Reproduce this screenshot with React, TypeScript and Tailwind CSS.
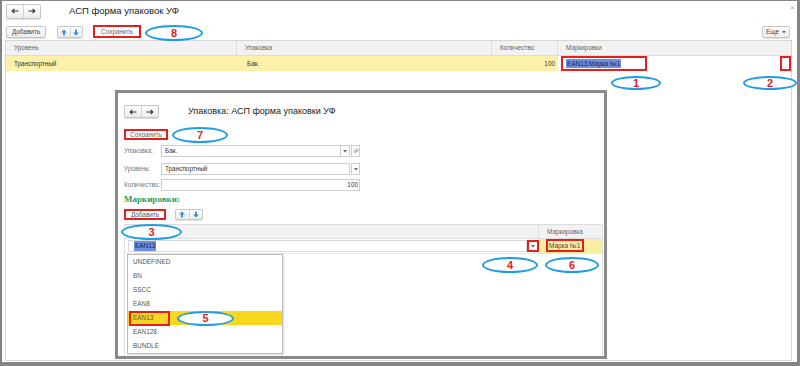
import React from 'react';

// мелкие иконки в стиле 1С
const ArrowLeft = () => (
  <svg width="8" height="6" viewBox="0 0 8 6">
    <path d="M7.5 3H1.2M3.4 0.8L1.2 3l2.2 2.2" stroke="#333" strokeWidth="1.2" fill="none" />
  </svg>
);

const ArrowRight = () => (
  <svg width="8" height="6" viewBox="0 0 8 6">
    <path d="M0.5 3h6.3M4.6 0.8L6.8 3 4.6 5.2" stroke="#333" strokeWidth="1.2" fill="none" />
  </svg>
);

const BlueUp = () => (
  <svg width="6" height="7" viewBox="0 0 7 7">
    <path d="M3.5 0L7 3.6H4.6V7H2.4V3.6H0Z" fill="#3d8ce0" />
  </svg>
);

const BlueDown = () => (
  <svg width="6" height="7" viewBox="0 0 7 7">
    <path d="M3.5 7L7 3.4H4.6V0H2.4V3.4H0Z" fill="#3d8ce0" />
  </svg>
);

const Caret = () => (
  <svg width="4" height="3" viewBox="0 0 4 3">
    <path d="M0 0h4L2 2.5Z" fill="#666" />
  </svg>
);

const LinkIcon = () => (
  <svg width="6" height="6" viewBox="0 0 8 8">
    <rect x="0.8" y="3.2" width="4" height="2.6" rx="1.3" transform="rotate(-45 2.8 4.5)" stroke="#888" strokeWidth="0.9" fill="none" />
    <rect x="3.2" y="2.2" width="4" height="2.6" rx="1.3" transform="rotate(-45 5.2 3.5)" stroke="#888" strokeWidth="0.9" fill="none" />
  </svg>
);

const btn =
  'flex items-center justify-center rounded-[2px] border border-[#c6c6c6] bg-gradient-to-b from-white to-[#ececec] shadow-[0_1px_0_#e2e2e2] text-[#444]';

const NavButtons = ({ h }: { h: string }) => (
  <div className={`${btn} ${h} w-[35px]`}>
    <div className="flex-1 flex items-center justify-center h-full border-r border-[#d4d4d4]">
      <ArrowLeft />
    </div>
    <div className="flex-1 flex items-center justify-center h-full">
      <ArrowRight />
    </div>
  </div>
);

const UpDown = ({ w, h }: { w: string; h: string }) => (
  <div className={`${btn} ${w} ${h}`}>
    <div className="flex-1 flex items-center justify-center h-full border-r border-[#d4d4d4]">
      <BlueUp />
    </div>
    <div className="flex-1 flex items-center justify-center h-full">
      <BlueDown />
    </div>
  </div>
);

// выноска: голубой овал с красной цифрой
const Callout = ({ n, cls }: { n: string; cls: string }) => (
  <div
    className={`absolute ${cls} rounded-[50%] border-2 border-[#1e9de6] bg-white flex items-center justify-center text-[#e3211c] font-bold text-[11px] leading-none`}
  >
    {n}
  </div>
);

const RedBox = ({ cls }: { cls: string }) => (
  <div className={`absolute ${cls} border-2 border-[#e3211c]`} />
);

const markingTypes = ['UNDEFINED', 'BN', 'SSCC', 'EAN8', 'EAN13', 'EAN128', 'BUNDLE'];

export default function App() {
  return (
    <div className="relative w-[800px] h-[366px] overflow-hidden bg-white pl-[2px] pt-[1px] pr-[3px] pb-[4px] flex flex-col font-['Liberation_Sans',Arial,sans-serif] text-[6.4px] text-[#333]">
      {/* Заголовок формы */}
      <div className="h-[20px] shrink-0 flex items-center pl-[4px]">
        <NavButtons h="h-[15px]" />
        <div className="ml-[28px] text-[9.5px] text-[#222]">АСП форма упаковок УФ</div>
      </div>
      <div className="absolute left-[790px] top-[2px] text-[8px] text-[#999]">×</div>

      {/* Командная панель */}
      <div className="h-[19px] shrink-0 flex items-end pb-[2px] pl-[4px] pr-[7px]">
        <div className={`${btn} w-[40px] h-[12px]`}>Добавить</div>
        <div className="ml-[11px]">
          <UpDown w="w-[26px]" h="h-[12px]" />
        </div>
        <div className="ml-[10px] w-[48px] h-[13px] border-2 border-[#e3211c] bg-white flex items-center justify-center text-[#666]">
          Сохранить
        </div>
        <div className={`${btn} ml-auto w-[28px] h-[12px] gap-[3px]`}>
          Еще
          <Caret />
        </div>
      </div>

      {/* Таблица упаковок */}
      <div className="flex-1 ml-[3px] mr-[5px] mb-[1px] border border-[#d6d6d6] flex flex-col">
        <div className="h-[15px] shrink-0 flex bg-[#f2f2f2] border-b border-[#dcdcdc] text-[#666]">
          <div className="w-[231px] pl-[8px] flex items-center border-r border-[#dcdcdc]">Уровень</div>
          <div className="w-[255px] pl-[8px] flex items-center border-r border-[#dcdcdc]">Упаковка</div>
          <div className="w-[66px] pl-[8px] flex items-center border-r border-[#dcdcdc]">Количество</div>
          <div className="flex-1 pl-[8px] flex items-center">Маркировки</div>
        </div>
        <div className="h-[15px] shrink-0 flex">
          <div className="w-[231px] pl-[8px] flex items-center bg-[#fdf0a8]">Транспортный</div>
          <div className="w-[255px] pl-[10px] flex items-center bg-[#fdf0a8]">Бак.</div>
          <div className="w-[66px] pr-[3px] flex items-center justify-end bg-[#fdf0a8]">100</div>
          <div className="flex-1 flex items-stretch">
            <div className="ml-[3px] w-[86px] border-2 border-[#e3211c] flex items-center pl-[3px]">
              <span className="bg-[#6f8fdc] text-[#0f1f5c] px-[1px]">EAN13:Марка №1</span>
            </div>
            <div className="ml-auto w-[11px] border-2 border-[#e3211c] flex items-end justify-center text-[#999] leading-none">
              ...
            </div>
          </div>
        </div>
      </div>

      <Callout n="8" cls="left-[145px] top-[25px] w-[58px] h-[16px]" />
      <Callout n="1" cls="left-[611px] top-[76px] w-[50px] h-[14px]" />
      <Callout n="2" cls="left-[743px] top-[76px] w-[54px] h-[14px]" />

      {/* Окно элемента упаковки */}
      <div className="absolute left-[115px] top-[90px] w-[492px] h-[269px] border-[3px] border-[#8a8a8a] bg-white flex flex-col pl-[6px] pr-[1px]">
        <div className="mt-[12px] h-[13px] flex items-center">
          <NavButtons h="h-[13px]" />
          <div className="ml-[29px] text-[9px] text-[#222]">Упаковка: АСП форма упаковки УФ</div>
        </div>

        <div className="mt-[11px] w-[44px] h-[11px] border-2 border-[#e3211c] flex items-center justify-center text-[#666]">
          Сохранить
        </div>

        <div className="mt-[5px] h-[12px] flex items-stretch w-[236px]">
          <div className="w-[37px] flex items-center text-[#777]">Упаковка:</div>
          <div className="flex-1 border border-[#cdcdcd] flex items-center pl-[3px]">Бак.</div>
          <div className="w-[9px] border border-l-0 border-[#cdcdcd] flex items-center justify-center">
            <Caret />
          </div>
          <div className="ml-[1px] w-[9px] border border-[#cdcdcd] flex items-center justify-center">
            <LinkIcon />
          </div>
        </div>

        <div className="mt-[6px] h-[12px] flex items-stretch w-[236px]">
          <div className="w-[37px] flex items-center text-[#777]">Уровень:</div>
          <div className="flex-1 border border-[#cdcdcd] flex items-center pl-[3px]">Транспортный</div>
          <div className="ml-[1px] w-[9px] border border-[#cdcdcd] flex items-center justify-center">
            <Caret />
          </div>
        </div>

        <div className="mt-[4px] h-[12px] flex items-stretch w-[236px]">
          <div className="w-[37px] flex items-center text-[#777]">Количество:</div>
          <div className="flex-1 border border-[#cdcdcd] flex items-center justify-end pr-[1px]">100</div>
        </div>

        <div className="mt-[3px] h-[12px] flex items-center font-['Liberation_Serif','Times_New_Roman',serif] font-bold text-[9px] text-[#2f9a5c]">
          Маркировки:
        </div>

        <div className="mt-[3px] h-[11px] flex items-stretch">
          <div className="w-[42px] border-2 border-[#e3211c] flex items-center justify-center text-[#555]">Добавить</div>
          <div className="ml-[9px]">
            <UpDown w="w-[28px]" h="h-[11px]" />
          </div>
        </div>

        <div className="mt-[4px] flex-1 border-x border-[#e0e0e0] flex flex-col">
          <div className="h-[15px] shrink-0 flex bg-[#f2f2f2] border-y border-[#dcdcdc] text-[#666]">
            <div className="w-[414px] border-r border-[#dcdcdc]" />
            <div className="flex-1 pl-[8px] flex items-center">Маркировка</div>
          </div>
          <div className="h-[15px] shrink-0 flex border-b border-[#e6e6e6]">
            <div className="w-[414px] flex items-stretch pl-[3px] py-[1px]">
              <div className="flex-1 border border-[#dadada] flex items-center pl-[5px]">
                <span className="bg-[#6f8fdc] text-[#0f1f5c] px-[1px]">EAN13</span>
              </div>
              <div className="w-[12px] border-2 border-[#e3211c] flex items-center justify-center">
                <Caret />
              </div>
            </div>
            <div className="flex-1 bg-[#fbeea2] flex items-start pl-[7px]">
              <div className="w-[38px] h-[13px] border-2 border-[#e3211c] flex items-center pl-[1px] text-[#444]">
                Марка №1
              </div>
            </div>
          </div>
        </div>
      </div>

      {/* Выпадающий список видов маркировки */}
      <div className="absolute left-[127px] top-[254px] w-[156px] h-[100px] border border-[#bdbdbd] bg-white shadow-[1px_1px_2px_rgba(0,0,0,0.15)] flex flex-col">
        {markingTypes.map((t) => (
          <div
            key={t}
            className={`h-[14px] shrink-0 flex items-center pl-[5px] text-[#555] ${
              t === 'EAN13' ? 'bg-[#f8d71e]' : ''
            }`}
          >
            {t}
          </div>
        ))}
      </div>

      <RedBox cls="left-[129px] top-[311px] w-[41px] h-[15px]" />
      <Callout n="7" cls="left-[172px] top-[127px] w-[56px] h-[16px]" />
      <Callout n="3" cls="left-[121px] top-[224px] w-[61px] h-[16px]" />
      <Callout n="4" cls="left-[482px] top-[257px] w-[56px] h-[16px]" />
      <Callout n="6" cls="left-[545px] top-[257px] w-[54px] h-[16px]" />
      <Callout n="5" cls="left-[177px] top-[311px] w-[57px] h-[15px]" />

      {/* рамка скриншота */}
      <div className="absolute inset-0 pointer-events-none border-l-2 border-t border-r-[3px] border-b-4 border-[#858585]" />
    </div>
  );
}
